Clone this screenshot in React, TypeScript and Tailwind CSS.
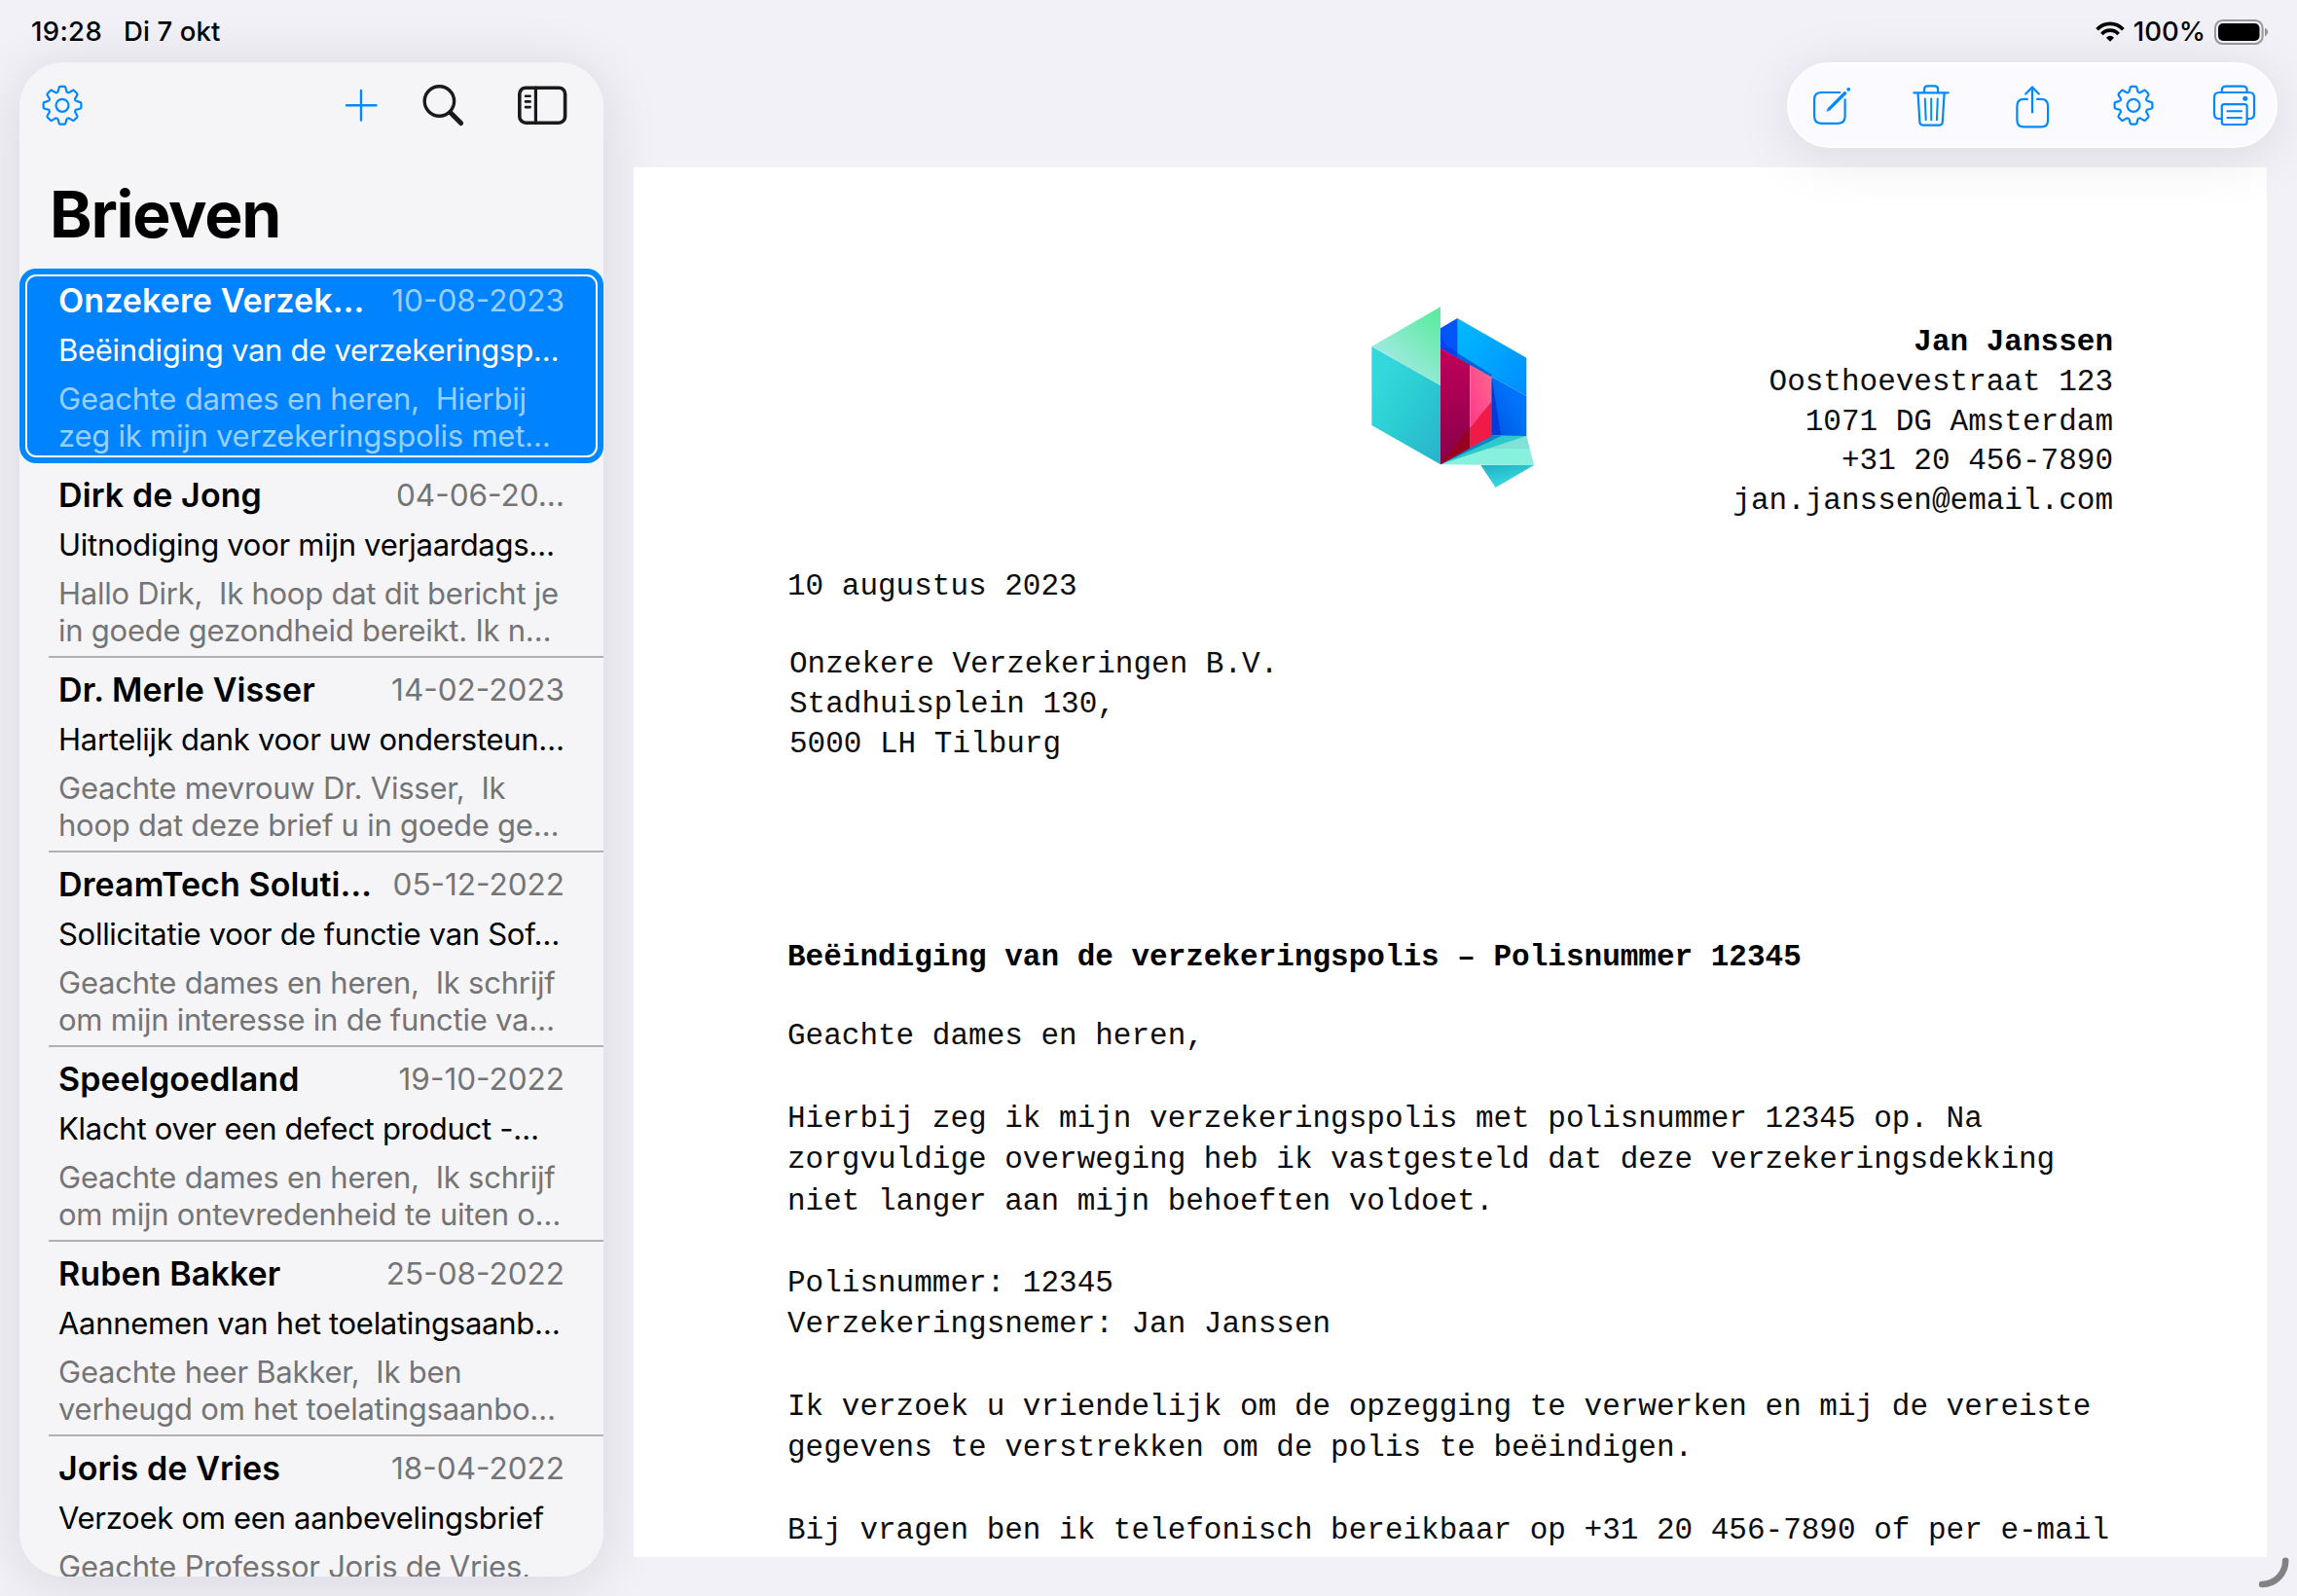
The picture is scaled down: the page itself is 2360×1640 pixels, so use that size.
import React from "react";

type Letter = {
  name: string;
  date: string;
  subject: string;
  preview: string[];
  selected?: boolean;
};

const letters: Letter[] = [
  { name: "Onzekere Verzek…", date: "10-08-2023", subject: "Beëindiging van de verzekeringsp…", preview: ["Geachte dames en heren,  Hierbij", "zeg ik mijn verzekeringspolis met…"], selected: true },
  { name: "Dirk de Jong", date: "04-06-20…", subject: "Uitnodiging voor mijn verjaardags…", preview: ["Hallo Dirk,  Ik hoop dat dit bericht je", "in goede gezondheid bereikt. Ik n…"] },
  { name: "Dr. Merle Visser", date: "14-02-2023", subject: "Hartelijk dank voor uw ondersteun…", preview: ["Geachte mevrouw Dr. Visser,  Ik", "hoop dat deze brief u in goede ge…"] },
  { name: "DreamTech Soluti…", date: "05-12-2022", subject: "Sollicitatie voor de functie van Sof…", preview: ["Geachte dames en heren,  Ik schrijf", "om mijn interesse in de functie va…"] },
  { name: "Speelgoedland", date: "19-10-2022", subject: "Klacht over een defect product -…", preview: ["Geachte dames en heren,  Ik schrijf", "om mijn ontevredenheid te uiten o…"] },
  { name: "Ruben Bakker", date: "25-08-2022", subject: "Aannemen van het toelatingsaanb…", preview: ["Geachte heer Bakker,  Ik ben", "verheugd om het toelatingsaanbo…"] },
  { name: "Joris de Vries", date: "18-04-2022", subject: "Verzoek om een aanbevelingsbrief", preview: ["Geachte Professor Joris de Vries,"] },
];

const senderLines = ["Oosthoevestraat 123", "1071 DG Amsterdam", "+31 20 456-7890", "jan.janssen@email.com"];
const recipientLines = ["Onzekere Verzekeringen B.V.", "Stadhuisplein 130,", "5000 LH Tilburg"];
const bodyLines = [
  "Hierbij zeg ik mijn verzekeringspolis met polisnummer 12345 op. Na",
  "zorgvuldige overweging heb ik vastgesteld dat deze verzekeringsdekking",
  "niet langer aan mijn behoeften voldoet.",
  "",
  "Polisnummer: 12345",
  "Verzekeringsnemer: Jan Janssen",
  "",
  "Ik verzoek u vriendelijk om de opzegging te verwerken en mij de vereiste",
  "gegevens te verstrekken om de polis te beëindigen.",
  "",
  "Bij vragen ben ik telefonisch bereikbaar op +31 20 456-7890 of per e-mail",
  "op jan.janssen@email.com.",
];

function gearPath() {
  const pt = (r: number, deg: number) => {
    const a = ((deg - 90) * Math.PI) / 180;
    return `${(24 + r * Math.cos(a)).toFixed(2)} ${(24.3 + r * Math.sin(a)).toFixed(2)}`;
  };
  let d = `M${pt(19.5, -6.5)}`;
  for (let i = 0; i < 8; i++) {
    const c = i * 45;
    d += `L${pt(19.5, c + 6.5)}Q${pt(19.5, c + 10)} ${pt(18.2, c + 11)}L${pt(16, c + 15)}Q${pt(14.4, c + 17.5)} ${pt(14.4, c + 20.5)}L${pt(14.4, c + 24.5)}Q${pt(14.4, c + 27.5)} ${pt(16, c + 30)}L${pt(18.2, c + 34)}Q${pt(19.5, c + 35)} ${pt(19.5, c + 38.5)}`;
  }
  return d + "Z";
}

const GEAR = gearPath();

function Icon({ children, className = "text-[#0088ff]" }: { children: React.ReactNode; className?: string }) {
  return (
    <svg viewBox="0 0 48 48" className={`size-12 shrink-0 ${className}`} fill="none" stroke="currentColor" strokeWidth={2.2} strokeLinecap="round" strokeLinejoin="round">
      {children}
    </svg>
  );
}

function GearIcon() {
  return (
    <Icon>
      <path d={GEAR} />
      <circle cx="24" cy="24.3" r="6.5" />
    </Icon>
  );
}

function EditIcon() {
  return (
    <Icon>
      <path d="M34 11H14.3Q7.1 11 7.1 18.2V35.6Q7.1 42.8 14.3 42.8H31.4Q38.6 42.8 38.6 35.6V17.6" strokeLinecap="butt" />
      <path d="M19.3 31l1.7-4L38.4 9.6l2.3 2.3L23.3 29.2z" fill="currentColor" stroke="none" />
      <circle cx="42.2" cy="7.8" r="1.9" fill="currentColor" stroke="none" />
    </Icon>
  );
}

function TrashIcon() {
  return (
    <Icon>
      <path d="M5.4 11.4H40.6M16.1 11V7.8Q16.1 4.4 19.4 4.4H26.8Q30.1 4.4 30.1 7.8V11" />
      <path d="M9.6 12L11.4 41.5Q11.6 44.6 14.6 44.6H31.6Q34.6 44.6 34.8 41.5L36.6 12" />
      <path d="M16.8 17.5L17.7 39.2M23.2 17.5V39.2M29.8 17.5L28.9 39.2" strokeWidth={2} />
    </Icon>
  );
}

function ShareIcon() {
  return (
    <Icon>
      <path d="M19.7 17.8H15.4Q8.4 17.8 8.4 24.8V39.4Q8.4 46.4 15.4 46.4H33.1Q40.1 46.4 40.1 39.4V24.8Q40.1 17.8 33.1 17.8H28.2" strokeLinecap="butt" />
      <path d="M24 31.5V5.5M17.2 12.4L24 5.4L30.8 12.4" />
    </Icon>
  );
}

function PrinterIcon() {
  return (
    <Icon>
      <path d="M11.8 10.5V9Q11.8 4.6 16 4.6H33.6Q37.6 4.6 37.6 9V10.5" />
      <path d="M11 38H9Q4 38 4 33V16Q4 11 9 11H40Q45 11 45 16V33Q45 38 40 38H38" />
      <rect x="11.8" y="23.2" width="25.8" height="20.8" rx="2.4" />
      <path d="M17.4 30.2H32M17.4 36.9H32" strokeWidth={2} />
      <circle cx="35.8" cy="17.2" r="2.5" fill="currentColor" stroke="none" />
    </Icon>
  );
}

function StatusBar() {
  return (
    <header className="flex h-16 shrink-0 items-start justify-between pl-8 pr-[29px] pt-3 text-[27.5px] leading-[41px] font-medium text-black">
      <div className="flex gap-[22px]">
        <span className="tracking-[0.35px]">19:28</span>
        <span className="tracking-[0.1px]">Di 7 okt</span>
      </div>
      <div className="flex items-center">
        <svg viewBox="0 0 30 22" className="mr-[9px] h-[22px] w-[30px]" fill="none" stroke="#000" strokeWidth="3.7">
          <path d="M1.6 8.3Q7.3 2.4 15 2.4T28.4 8.3" />
          <path d="M6.4 13Q10 9.2 15 9.2T23.6 13" />
          <path d="M15 20.8L10.9 16.7Q15 13 19.1 16.7Z" fill="#000" stroke="none" />
        </svg>
        <span className="mr-[9px]">100%</span>
        <svg viewBox="0 0 56 26" className="h-[26px] w-14">
          <rect x="1" y="1" width="48.6" height="24" rx="7.6" fill="none" stroke="#98979c" strokeWidth="2" />
          <rect x="4" y="4" width="42.5" height="18" rx="5" fill="#000" />
          <path d="M52 8.6Q55.2 10.4 55.2 13T52 17.4Z" fill="#98979c" />
        </svg>
      </div>
    </header>
  );
}

function LetterRow({ letter }: { letter: Letter }) {
  const { selected } = letter;
  const muted = selected ? "text-[#99cfff]" : "text-[#747476]";
  return (
    <li className={`relative h-[200px] shrink-0 px-10 pt-[13px] ${selected ? "rounded-[17px] bg-[#0088ff] text-white" : "text-black"}`}>
      {selected && <div className="absolute inset-x-[6px] top-[6px] bottom-[6px] rounded-[11px] border-2 border-white bg-[#0083ff]" />}
      {!selected && <div className="absolute bottom-0 left-[30px] right-0 h-[2px] bg-[#b1b1b4]" />}
      <div className="relative whitespace-pre">
        <div className="flex justify-between leading-[40px]">
          <span className="text-[34px] font-semibold tracking-[0.1px]">{letter.name}</span>
          <span className={`text-[31.5px] ${muted}`}>{letter.date}</span>
        </div>
        <p className="mt-[11px] text-[31px] leading-[40px] tracking-[-0.28px]">{letter.subject}</p>
        <div className={`mt-[11px] text-[31px] leading-[38px] tracking-[-0.24px] ${muted}`}>
          {letter.preview.map((line) => (
            <p key={line}>{line}</p>
          ))}
        </div>
      </div>
    </li>
  );
}

function Sidebar() {
  return (
    <aside className="relative flex h-[1556px] w-[600px] shrink-0 flex-col overflow-hidden rounded-[46px] bg-[#f5f5f7]">
      <div className="flex h-[88px] shrink-0 items-center pl-[19.5px] pr-[35px]">
        <GearIcon />
        <div className="ml-auto flex">
          <Icon>
            <path d="M24 9V39.5M9 24.3H39.5" strokeWidth={2.4} />
          </Icon>
          <div className="ml-[37px] flex">
            <Icon className="text-[#1a1a1a]">
              <circle cx="19.4" cy="20" r="15.2" strokeWidth={3.4} />
              <path d="M30.6 31.6L41.6 42.6" strokeWidth={5} />
            </Icon>
          </div>
          <svg viewBox="0 0 56 48" className="ml-[49px] h-12 w-14" fill="none" stroke="#1a1a1a" strokeWidth="3.6" strokeLinecap="round">
            <rect x="4.8" y="6.2" width="46.8" height="36" rx="6.4" />
            <path d="M21.4 6V42" strokeWidth="3.2" />
            <path d="M11 14.7H15.6M11 20.4H15.6M11 26.1H15.6" strokeWidth="2.6" />
          </svg>
        </div>
      </div>
      <h1 className="mt-[28px] pl-[31px] text-[66px] leading-[80px] font-bold tracking-[-1.25px] text-black">Brieven</h1>
      <ul className="mt-4 flex flex-col">
        {letters.map((l) => (
          <LetterRow key={l.name} letter={l} />
        ))}
      </ul>
    </aside>
  );
}

function Logo() {
  return (
    <svg viewBox="0 0 660 690" className="h-[230px] w-[220px]">
      <defs>
        <linearGradient id="green" x1="0" y1="1" x2="0.8" y2="0"><stop offset="0.2" stopColor="#a9e9e8" /><stop offset="1" stopColor="#5deba2" /></linearGradient>
        <linearGradient id="cyan" x1="0" y1="0" x2="1" y2="1"><stop offset="0.2" stopColor="#33d8dc" /><stop offset="0.5" stopColor="#2bced3" /><stop offset="1" stopColor="#29b2cc" /></linearGradient>
        <linearGradient id="sky" x1="0" y1="0" x2="1" y2="1"><stop offset="0" stopColor="#00bcff" /><stop offset="1" stopColor="#008cff" /></linearGradient>
        <linearGradient id="navy" x1="0" y1="1" x2="1" y2="0"><stop offset="0" stopColor="#0054e2" /><stop offset="0.6" stopColor="#0072f8" /><stop offset="1" stopColor="#0078ff" /></linearGradient>
        <linearGradient id="wine" x1="0" y1="0" x2="0" y2="1"><stop offset="0" stopColor="#c2005b" /><stop offset="1" stopColor="#86004a" /></linearGradient>
        <linearGradient id="pink" x1="0" y1="1" x2="1" y2="0"><stop offset="0" stopColor="#ff358c" /><stop offset="1" stopColor="#ff6a8c" /></linearGradient>
        <linearGradient id="tail" x1="0" y1="0" x2="0.5" y2="1"><stop offset="0" stopColor="#1fb0c4" /><stop offset="1" stopColor="#3bdde0" /></linearGradient>
      </defs>
      <polygon points="300,142 352,111 400,180 400,262 300,203" fill="#0055f8" />
      <polygon points="300,160 315,192 457,280 457,291 300,203" fill="#0042ee" />
      <polygon points="352,111 565,233 565,351 457,291 352,222" fill="url(#sky)" />
      <polygon points="352,218 457,284 457,293 352,234" fill="#0064dc" />
      <polygon points="457,291 565,351 565,474 457,474" fill="url(#navy)" />
      <polygon points="457,291 487,474 457,474" fill="#0039dc" />
      <polygon points="300,562 565,474 588,564" fill="#88f1dd" />
      <polygon points="565,474 575,513 448,513" fill="#82e0d6" />
      <polygon points="300,562 457,472 565,474" fill="#2ccaca" />
      <polygon points="300,562 457,472 487,474" fill="#0885c4" />
      <polygon points="300,203 391,255 391,511 300,562" fill="url(#wine)" />
      <polygon points="391,255 457,292 457,370 391,447" fill="url(#pink)" />
      <polygon points="457,368 457,474 391,511 391,447" fill="#f01a47" />
      <polygon points="391,447 391,511 300,562" fill="#980021" />
      <polygon points="424,564 588,564 470,633" fill="url(#tail)" />
      <polygon points="88,198 300,318 300,562 88,441" fill="url(#cyan)" />
      <polygon points="88,198 300,76 300,318" fill="url(#green)" />
    </svg>
  );
}

function LetterPage() {
  return (
    <article className="ml-px mt-5 h-[1428px] w-[1678px] overflow-hidden bg-white pl-[158px] pr-[158px] pt-[118px] font-['Liberation_Mono',monospace] text-[31px] whitespace-pre text-[#0c0c0c]">
      <div className="flex h-[230px] justify-between">
        <div className="ml-[571px]">
          <Logo />
        </div>
        <address className="mt-[42.4px] text-right leading-[40.6px] not-italic">
          <p className="font-bold text-black">Jan Janssen</p>
          {senderLines.map((l) => (
            <p key={l}>{l}</p>
          ))}
        </address>
      </div>
      <p className="mt-[63px] leading-[40px]">10 augustus 2023</p>
      <div className="mt-[40px] pl-[2px] leading-[40.8px]">
        {recipientLines.map((l) => (
          <p key={l}>{l}</p>
        ))}
      </div>
      <h2 className="mt-[178px] leading-[42px] font-bold text-black">Beëindiging van de verzekeringspolis – Polisnummer 12345</h2>
      <p className="mt-[39px] leading-[42px]">Geachte dames en heren,</p>
      <div className="mt-[42.8px] leading-[42.25px]">
        {bodyLines.map((l, i) => (
          <p key={i} className="h-[42.25px]">{l}</p>
        ))}
      </div>
    </article>
  );
}

export default function App() {
  return (
    <div className="relative flex h-[1640px] w-[2360px] flex-col overflow-hidden bg-[#f2f1f7] font-['Inter',sans-serif]">
      <StatusBar />
      <main className="flex pl-5">
        <div className="h-[1556px] rounded-[46px] shadow-[0_6px_60px_rgba(30,25,50,0.12)]">
          <Sidebar />
        </div>
        <section className="ml-[30px] w-[1690px]">
          <nav className="relative z-10 ml-auto flex h-[88px] w-[504px] items-center justify-between rounded-full border-2 border-white bg-[#fbfaff] px-[19px] shadow-[0_8px_60px_rgba(20,20,40,0.10)]">
            <EditIcon />
            <TrashIcon />
            <ShareIcon />
            <GearIcon />
            <PrinterIcon />
          </nav>
          <LetterPage />
        </section>
      </main>
      <svg viewBox="0 0 40 40" className="absolute bottom-0 right-0 size-10" fill="none" stroke="#828282" strokeWidth="6.6" strokeLinecap="round">
        <path d="M28.2 3.8A24.2 24.2 0 0 1 4.1 28" />
      </svg>
    </div>
  );
}
